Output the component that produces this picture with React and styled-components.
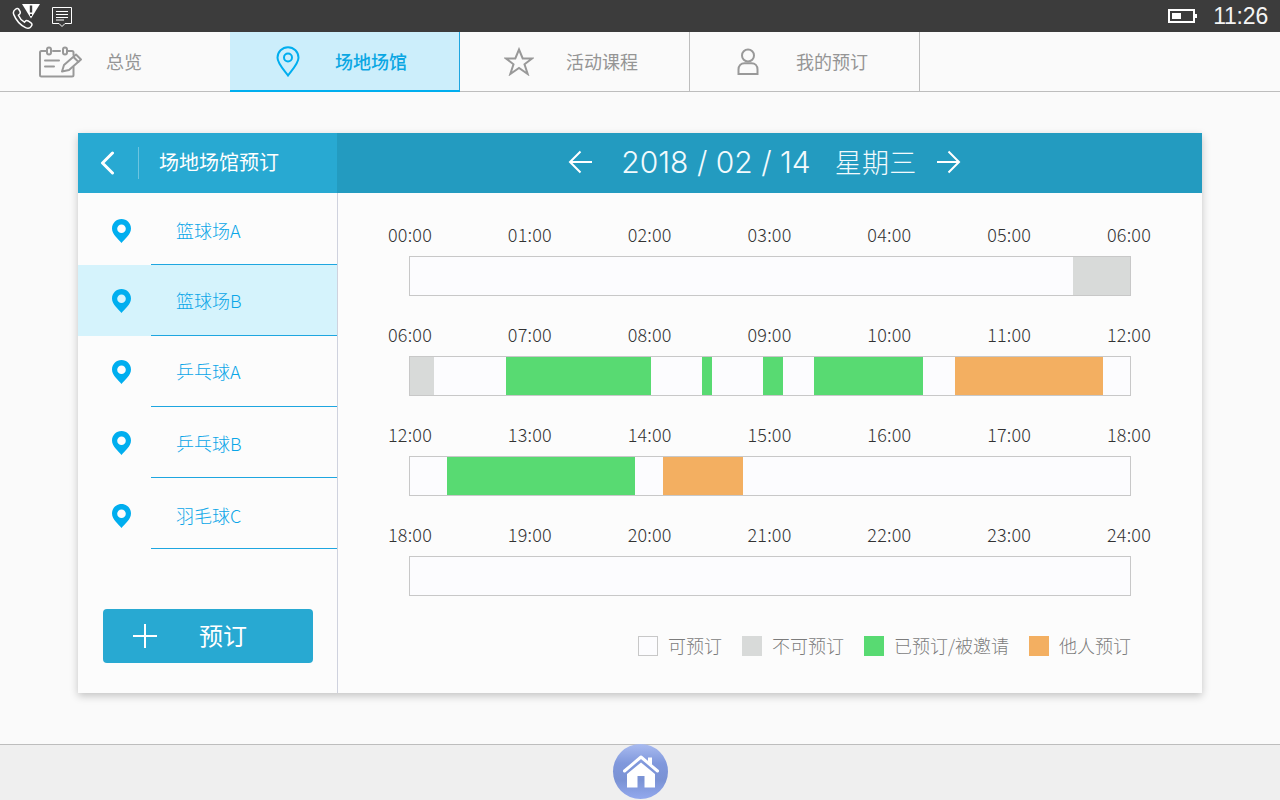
import React from "react";
import styled, { createGlobalStyle } from "styled-components";

const CJK = `"Noto Sans CJK SC", "Noto Sans", sans-serif`;

const Global = createGlobalStyle`
  html, body { margin: 0; padding: 0; }
  body { background: #fafafa; font-family: ${CJK}; }
  * { box-sizing: border-box; }
`;

const Page = styled.div`
  width: 1280px;
  height: 800px;
  display: flex;
  flex-direction: column;
  overflow: hidden;
  background: #fafafa;
`;

const StatusBar = styled.header`
  height: 32px;
  flex: none;
  background: #3c3c3c;
  display: flex;
  align-items: center;
  padding: 0 12px;
  color: #fff;
`;
const StatusIcons = styled.div`
  display: flex;
  align-items: center;
  flex: 1;
`;
const Clock = styled.span`
  font-family: "Liberation Sans", Arial, sans-serif;
  font-size: 23px;
  line-height: 32px;
  letter-spacing: -0.2px;
  margin-left: 16px;
  color: #f4f4f4;
`;

const Nav = styled.nav`
  height: 60px;
  flex: none;
  display: flex;
  border-bottom: 1px solid #bdbdbd;
  background: #fafafa;
`;
const Tab = styled.div`
  width: 230px;
  height: ${p => (p.$active ? "60px" : "59px")};
  display: flex;
  align-items: center;
  padding-left: ${p => p.$pad}px;
  color: ${p => (p.$active ? "#0ba7e3" : "#959595")};
  background: ${p => (p.$active ? "#cceefb" : "transparent")};
  border-right: 1px solid ${p => (p.$active ? "#1ea6e0" : p.$plain ? "transparent" : "#bdbdbd")};
  border-bottom: ${p => (p.$active ? "2px solid #00aeef" : "none")};
  font-size: 18px;
  font-weight: ${p => (p.$active ? 500 : 400)};
`;
const TabIcon = styled.span`
  width: ${p => p.$w}px;
  margin-right: ${p => p.$gap}px;
  flex: none;
  display: flex;
  justify-content: center;
`;
const TabLabel = styled.span`
  margin-bottom: ${p => (p.$active ? 0 : 2)}px;
`;

const Main = styled.main`
  flex: 1;
  padding: 41px 78px 0;
`;
const Card = styled.section`
  width: 1124px;
  height: 560px;
  display: grid;
  grid-template-columns: 259px 1fr;
  grid-template-rows: 60px 1fr;
  background: #fcfcfc;
  box-shadow: 0 3px 8px rgba(0, 0, 0, 0.22);
`;
const SideHead = styled.div`
  background: #28a9d2;
  display: flex;
  align-items: center;
  color: #fff;
  padding-left: 22px;
`;
const BackBtn = styled.span`
  width: 39px;
  height: 32px;
  display: flex;
  align-items: center;
  border-right: 1px solid #6cc4e0;
`;
const SideTitle = styled.h1`
  margin: 0 0 2px 20px;
  font-size: 20px;
  font-weight: 400;
  line-height: 28px;
`;
const DateHead = styled.div`
  background: #239bc0;
  color: #fff;
  display: flex;
  align-items: center;
  justify-content: center;
  padding-right: 10px;
`;
const DateText = styled.span`
  font-family: Inter, "Liberation Sans", sans-serif;
  font-size: 30px;
  line-height: 40px;
  font-weight: 300;
  margin: 0 20px 2px 29px;
  white-space: pre;
  color: #f2fafd;
`;
const WeekText = styled.span`
  font-size: 27px;
  font-weight: 300;
  font-family: ${CJK};
  letter-spacing: 0.3px;
  margin-left: 24px;
`;

const Side = styled.aside`
  display: flex;
  flex-direction: column;
`;
const Venue = styled.div`
  height: ${p => p.$h}px;
  display: flex;
  background: ${p => (p.$active ? "#d5f3fc" : "transparent")};
`;
const VenueIcon = styled.span`
  width: 73px;
  flex: none;
  display: flex;
  align-items: center;
  justify-content: center;
  padding: ${p => p.$nudge}px 0 0 14px;
`;
const VenueName = styled.div`
  flex: 1;
  display: flex;
  align-items: center;
  padding: ${p => p.$nudge}px 0 2px 25px;
  border-bottom: 1px solid #1ea6e0;
  color: #0aa6e8;
  font-size: 18px;
  font-weight: 300;
`;
const AddBtn = styled.button`
  margin: 60px 0 0 25px;
  width: 210px;
  height: 54px;
  border: 0;
  border-radius: 4px;
  background: #28a9d2;
  color: #fff;
  display: flex;
  align-items: center;
  padding: 0 0 0 30px;
  font-family: ${CJK};
  font-size: 24px;
  font-weight: 400;
`;
const AddLabel = styled.span`
  margin: 0 0 4px 42px;
`;

const Schedule = styled.div`
  border-left: 1px solid #cfd2de;
  padding: 33px 51px 0 50px;
`;
const Period = styled.div`
  height: ${p => (p.$last ? "70px" : "100px")};
`;
const Hours = styled.div`
  display: flex;
  justify-content: space-between;
  height: 20px;
  margin-bottom: 10px;
  font-size: 18px;
  line-height: 17px;
  font-weight: 300;
  letter-spacing: 0.2px;
  color: #333;
`;
const Bar = styled.div`
  height: 40px;
  margin: 0 20px 0 21px;
  border: 1px solid #c8c8c8;
  background: #fcfcfe;
  display: flex;
`;
const Segment = styled.span`
  width: ${p => p.$w}px;
  flex: none;
  background: ${p => p.$color};
`;
const Legend = styled.div`
  margin-top: 40px;
  padding-right: 20px;
  display: flex;
  justify-content: flex-end;
  align-items: center;
  height: 20px;
`;
const LegendItem = styled.div`
  display: flex;
  align-items: center;
  margin-left: ${p => p.$gap}px;
  color: #7c7c7c;
  font-size: 18px;
  font-weight: 300;
  line-height: 20px;
`;
const LegendLabel = styled.span`
  margin-bottom: 2px;
`;
const Swatch = styled.span`
  width: 20px;
  height: 20px;
  margin-right: 10px;
  background: ${p => p.$color};
  border: ${p => (p.$outline ? "1px solid #c8c8c8" : "none")};
`;

const Footer = styled.footer`
  height: 56px;
  flex: none;
  background: #efefef;
  border-top: 1px solid #bdbdbd;
  display: flex;
  justify-content: center;
`;
const HomeBtn = styled.div`
  width: 55px;
  height: 55px;
  margin-top: -1px;
  margin-left: 1px;
  border-radius: 50%;
  background: linear-gradient(180deg, #a9bbf0 0%, #8098dc 35%, #7a92d4 65%, #93a9ee 100%);
  display: flex;
  align-items: center;
  justify-content: center;
`;

const GREY = "#d8dad9", GREEN = "#58da72", ORANGE = "#f3af61", WHITE = "transparent";

const periods = [
  { hours: ["00:00", "01:00", "02:00", "03:00", "04:00", "05:00", "06:00"], segs: [[663, WHITE], [57, GREY]] },
  { hours: ["06:00", "07:00", "08:00", "09:00", "10:00", "11:00", "12:00"], segs: [[24, GREY], [72, WHITE], [145, GREEN], [51, WHITE], [10, GREEN], [51, WHITE], [20, GREEN], [31, WHITE], [109, GREEN], [32, WHITE], [148, ORANGE]] },
  { hours: ["12:00", "13:00", "14:00", "15:00", "16:00", "17:00", "18:00"], segs: [[37, WHITE], [188, GREEN], [28, WHITE], [80, ORANGE]] },
  { hours: ["18:00", "19:00", "20:00", "21:00", "22:00", "23:00", "24:00"], segs: [] },
];

const venues = [
  { name: "篮球场A", h: 72, nudge: 5, icon: 4 },
  { name: "篮球场B", h: 71, nudge: 1, icon: 0, active: true },
  { name: "乒乓球A", h: 71, nudge: 1, icon: 0 },
  { name: "乒乓球B", h: 71, nudge: 4, icon: 0 },
  { name: "羽毛球C", h: 71, nudge: 6, icon: 4 },
];

const legend = [
  { label: "可预订", color: "#fcfcfe", outline: true, gap: 0 },
  { label: "不可预订", color: GREY, gap: 20 },
  { label: "已预订/被邀请", color: GREEN, gap: 20 },
  { label: "他人预订", color: ORANGE, gap: 20 },
];

const PhoneAlert = () => (
  <svg width="30" height="30" viewBox="0 0 30 30" fill="none" style={{ display: "block" }}>
    <path d="M3.2 8.5 C1.5 9.8 .9 11.5 1.8 13.6 C4 19 8 24 13.6 26.6 C16 27.7 18 27 19 25.6 C20.4 24 20.2 22.8 19 21.9 L16.2 20 C15 19.3 14 19.4 13.1 20.4 L12.4 21.2 C9.6 19.6 7.6 17 6.4 14.2 L7.5 13.3 C8.4 12.4 8.5 11.5 8 10.4 L6.6 8 C5.8 7 4.4 7.5 3.2 8.5 Z" stroke="#fff" strokeWidth="1.5" />
    <path d="M10 3 H28 L19 17.5 Z" fill="#fff" />
    <path d="M19 4.5 V11.5" stroke="#3c3c3c" strokeWidth="2.4" />
    <path d="M19 13 V15" stroke="#3c3c3c" strokeWidth="2" />
  </svg>
);

const Message = () => (
  <svg width="20" height="20" viewBox="0 0 20 20" fill="none" style={{ display: "block", marginLeft: 10, marginTop: 2 }}>
    <path d="M.5 .5 H19.5 V16.5 H13 L10 19.5 L7 16.5 H.5 Z" stroke="#fff" strokeWidth="1" />
    <path d="M4 4.5 H16 M4 7.5 H16 M4 10.5 H16 M4 13 H12" stroke="#fff" strokeWidth="1" />
  </svg>
);

const Battery = () => (
  <svg width="29" height="14" viewBox="0 0 29 14" fill="none" style={{ display: "block" }}>
    <rect x="1" y="1" width="25" height="12" stroke="#fff" strokeWidth="2" />
    <rect x="4" y="4" width="9" height="6" fill="#fff" />
    <rect x="27" y="5" width="2" height="4" fill="#fff" />
  </svg>
);

const NoteIcon = () => (
  <svg width="44" height="32" viewBox="0 0 44 32" fill="none" stroke="#999" strokeWidth="2" strokeLinecap="round" strokeLinejoin="round" style={{ display: "block" }}>
    <path d="M7 5 H2.5 A1.5 1.5 0 0 0 1 6.5 V29 A1.5 1.5 0 0 0 2.5 30.5 H33 A1.5 1.5 0 0 0 34.5 29 V21" />
    <path d="M14 5 H21 M28 5 H33 A1.5 1.5 0 0 1 34.5 6.5 V9" />
    <rect x="8" y="1.5" width="4" height="7" rx="2" />
    <rect x="24" y="1.5" width="4" height="7" rx="2" />
    <path d="M6 14.5 H20 M6 20.5 H15" />
    <path d="M23 25.5 L25 19 L37 8.5 L42 13.5 L30 24 Z M34.5 11 L39.5 16" />
  </svg>
);
const PinOutline = () => (
  <svg width="24" height="31" viewBox="0 0 24 31" fill="none" stroke="#00aeef" strokeWidth="2" style={{ display: "block" }}>
    <path d="M12 29.5 C8 24 1.5 17.5 1.5 11.8 C1.5 5.8 6.2 1.2 12 1.2 C17.8 1.2 22.5 5.8 22.5 11.8 C22.5 17.5 16 24 12 29.5 Z" />
    <circle cx="12" cy="11.5" r="4" />
  </svg>
);
const StarIcon = () => (
  <svg width="30" height="29" viewBox="0 0 30 29" fill="none" stroke="#999" strokeWidth="2" style={{ display: "block" }}>
    <path d="M15 2.5 L18.7 11.5 H28 L20.5 17.3 L23.7 27 L15 21 L6.3 27 L9.5 17.3 L2 11.5 H11.3 Z" />
  </svg>
);
const UserIcon = () => (
  <svg width="22" height="27" viewBox="0 0 22 27" fill="none" stroke="#999" strokeWidth="2" style={{ display: "block" }}>
    <circle cx="11" cy="7.5" r="6" />
    <path d="M1.5 26 V21.5 C1.5 17.5 4 15.2 7.5 15.2 H14.5 C18 15.2 20.5 17.5 20.5 21.5 V26 Z" />
  </svg>
);
const Chevron = () => (
  <svg width="16" height="24" viewBox="0 0 16 24" fill="none" stroke="#fff" strokeWidth="3" strokeLinecap="round" strokeLinejoin="round" style={{ display: "block", marginTop: -1 }}>
    <path d="M12.5 2 L2.5 12 L12.5 22" />
  </svg>
);
const ArrowLeft = () => (
  <svg width="24" height="24" viewBox="0 0 24 24" fill="none" stroke="#fff" strokeWidth="2" style={{ display: "block", marginBottom: 2 }}>
    <path d="M24 12 H2 M12.5 1.5 L2 12 L12.5 22.5" />
  </svg>
);
const ArrowRight = () => (
  <svg width="24" height="24" viewBox="0 0 24 24" fill="none" stroke="#fff" strokeWidth="2" style={{ display: "block", marginBottom: 2 }}>
    <path d="M0 12 H22 M11.5 1.5 L22 12 L11.5 22.5" />
  </svg>
);
const PinSolid = () => (
  <svg width="19" height="24" viewBox="0 0 19 24" style={{ display: "block" }}>
    <path fillRule="evenodd" fill="#00aeef" d="M9.5 24 C6.5 20 0 15.5 0 9.5 C0 4.2 4.2 0 9.5 0 C14.8 0 19 4.2 19 9.5 C19 15.5 12.5 20 9.5 24 Z M9.5 5.5 A4.3 4.3 0 1 0 9.5 14.1 A4.3 4.3 0 1 0 9.5 5.5 Z" />
  </svg>
);
const Plus = () => (
  <svg width="24" height="24" viewBox="0 0 24 24" fill="none" stroke="#fff" strokeWidth="2" style={{ display: "block" }}>
    <path d="M12 0 V24 M0 12 H24" />
  </svg>
);
const House = () => (
  <svg width="36" height="33" viewBox="0 0 36 33" style={{ display: "block" }}>
    <path fill="#fff" d="M25 2.5 H29 V10 L25 6.5 Z" />
    <path fill="none" stroke="#fff" strokeWidth="3" strokeLinecap="round" strokeLinejoin="round" d="M1.5 16 L18 2 L34.5 16" />
    <path fill="#fff" fillRule="evenodd" d="M18 7.5 L32 19 V32.5 H4 V19 Z M14.5 21 V32.5 H21.5 V21 Z" />
  </svg>
);

const tabs = [
  { label: "总览", icon: <NoteIcon />, pad: 39, w: 44, gap: 23, plain: true },
  { label: "场地场馆", icon: <PinOutline />, pad: 46, w: 24, gap: 35, active: true },
  { label: "活动课程", icon: <StarIcon />, pad: 44, w: 30, gap: 32 },
  { label: "我的预订", icon: <UserIcon />, pad: 47, w: 22, gap: 37 },
];

export default function App() {
  return (
    <Page>
      <Global />
      <StatusBar>
        <StatusIcons>
          <PhoneAlert />
          <Message />
        </StatusIcons>
        <Battery />
        <Clock>11:26</Clock>
      </StatusBar>
      <Nav>
        {tabs.map(t => (
          <Tab key={t.label} $active={t.active} $plain={t.plain} $pad={t.pad}>
            <TabIcon $w={t.w} $gap={t.gap}>{t.icon}</TabIcon>
            <TabLabel $active={t.active}>{t.label}</TabLabel>
          </Tab>
        ))}
      </Nav>
      <Main>
        <Card>
          <SideHead>
            <BackBtn><Chevron /></BackBtn>
            <SideTitle>场地场馆预订</SideTitle>
          </SideHead>
          <DateHead>
            <ArrowLeft />
            <DateText>2018 / 02 / 14<WeekText>星期三</WeekText></DateText>
            <ArrowRight />
          </DateHead>
          <Side>
            {venues.map(v => (
              <Venue key={v.name} $h={v.h} $active={v.active}>
                <VenueIcon $nudge={v.icon}><PinSolid /></VenueIcon>
                <VenueName $nudge={v.nudge}>{v.name}</VenueName>
              </Venue>
            ))}
            <AddBtn>
              <Plus />
              <AddLabel>预订</AddLabel>
            </AddBtn>
          </Side>
          <Schedule>
            {periods.map((p, i) => (
              <Period key={p.hours[0]} $last={i === periods.length - 1}>
                <Hours>{p.hours.map((h, j) => <span key={j}>{h}</span>)}</Hours>
                <Bar>
                  {p.segs.map((s, j) => <Segment key={j} $w={s[0]} $color={s[1]} />)}
                </Bar>
              </Period>
            ))}
            <Legend>
              {legend.map(l => (
                <LegendItem key={l.label} $gap={l.gap}>
                  <Swatch $color={l.color} $outline={l.outline} />
                  <LegendLabel>{l.label}</LegendLabel>
                </LegendItem>
              ))}
            </Legend>
          </Schedule>
        </Card>
      </Main>
      <Footer>
        <HomeBtn><House /></HomeBtn>
      </Footer>
    </Page>
  );
}
